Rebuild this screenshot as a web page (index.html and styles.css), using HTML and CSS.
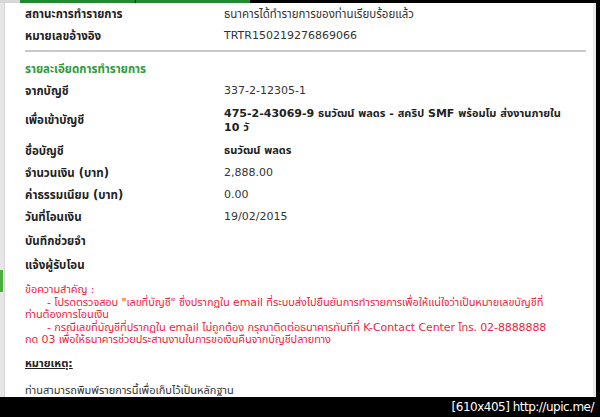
FILE: index.html
```html
<!DOCTYPE html>
<html lang="th">
<head>
<meta charset="utf-8">
<title>รายละเอียดการทำรายการ</title>
<link rel="stylesheet" href="styles.css">
</head>
<body>
<div class="frame">
  <div class="topbar">
    <div class="topbar-side"></div>
    <div class="tab"></div>
    <div class="tab tab-second"></div>
    <div class="topbar-rest"></div>
  </div>
  <div class="main">
    <div class="left-strip"><div class="left-mark"></div></div>
    <div class="content">
      <div class="row"><div class="label">สถานะการทำรายการ</div><div class="value thai">ธนาคารได้ทำรายการของท่านเรียบร้อยแล้ว</div></div>
      <div class="row"><div class="label">หมายเลขอ้างอิง</div><div class="value">TRTR150219276869066</div></div>
      <div class="divider"></div>
      <div class="section-title">รายละเอียดการทำรายการ</div>
      <div class="row"><div class="label">จากบัญชี</div><div class="value">337-2-12305-1</div></div>
      <div class="row row-tall"><div class="label">เพื่อเข้าบัญชี</div><div class="value strong">475-2-43069-9 ธนวัฒน์ พลดร - สคริป SMF พร้อมโม ส่งงานภายใน<br>10 วั</div></div>
      <div class="row"><div class="label">ชื่อบัญชี</div><div class="value strong">ธนวัฒน์ พลดร</div></div>
      <div class="row"><div class="label">จำนวนเงิน (บาท)</div><div class="value">2,888.00</div></div>
      <div class="row"><div class="label">ค่าธรรมเนียม (บาท)</div><div class="value">0.00</div></div>
      <div class="row"><div class="label">วันที่โอนเงิน</div><div class="value">19/02/2015</div></div>
      <div class="row row-memo"><div class="label">บันทึกช่วยจำ</div><div class="value"></div></div>
      <div class="row"><div class="label">แจ้งผู้รับโอน</div><div class="value"></div></div>
      <div class="notice">
        <span class="notice-line">ข้อความสำคัญ :</span>
        <span class="notice-line"><span class="indent"></span>- โปรดตรวจสอบ "เลขที่บัญชี" ซึ่งปรากฏใน email ที่ระบบส่งไปยืนยันการทำรายการเพื่อให้แน่ใจว่าเป็นหมายเลขบัญชีที่</span>
        <span class="notice-line">ท่านต้องการโอนเงิน</span>
        <span class="notice-line"><span class="indent"></span>- กรณีเลขที่บัญชีที่ปรากฏใน email ไม่ถูกต้อง กรุณาติดต่อธนาคารทันทีที่ K-Contact Center โทร. 02-8888888</span>
        <span class="notice-line">กด 03 เพื่อให้ธนาคารช่วยประสานงานในการขอเงินคืนจากบัญชีปลายทาง</span>
      </div>
      <div class="remark-title">หมายเหตุ:</div>
      <div class="remark-text">ท่านสามารถพิมพ์รายการนี้เพื่อเก็บไว้เป็นหลักฐาน</div>
    </div>
    <div class="right-strip"></div>
  </div>
  <div class="bottombar"><span class="watermark">[610x405] http://upic.me/</span></div>
</div>
</body>
</html>
```
FILE: styles.css
```css
html, body {
  margin: 0;
  padding: 0;
  background: #000;
}
.frame {
  width: 600px;
  height: 417px;
  display: grid;
  grid-template-rows: 3px 394px 20px;
  overflow: hidden;
  font-family: Tahoma, "DejaVu Sans", "Noto Sans Thai", sans-serif;
  font-size: 11px;
}
.topbar {
  display: flex;
  background: #000;
}
.topbar-side {
  width: 20px;
  background: #d8d8d8;
}
.tab {
  width: 115px;
  background: #1f8a2e;
}
.tab-second {
  margin-left: 1px;
  width: 114px;
}
.topbar-rest {
  flex: 1;
}
.main {
  display: flex;
  background: #fff;
}
.left-strip {
  width: 5px;
  background: #e6e6e6;
  border-right: 1px solid #d4d4d4;
  box-sizing: border-box;
  padding-top: 267px;
}
.left-mark {
  width: 3px;
  height: 22px;
  background: #4caf3c;
}
.content {
  flex: 1;
  padding: 0 0 0 20px;
  color: #333;
}
.right-strip {
  width: 7px;
  background: linear-gradient(to right, #e9e9e9 0, #e9e9e9 3px, #000 3px);
}
.row {
  display: flex;
  align-items: center;
  min-height: 22px;
}
.label {
  width: 199px;
  flex: none;
  font-weight: bold;
  color: #222;
  font-size: 11.5px;
}
.value {
  flex: 1;
  line-height: 14px;
}
.thai {
  font-size: 11.5px;
}
.strong {
  font-weight: bold;
  color: #222;
}
.row-tall {
  min-height: 33px;
  margin-top: 2px;
  margin-bottom: 3px;
}
.row-memo {
  min-height: 26px;
}
.divider {
  height: 2px;
  background: #c9c9c9;
  margin: 3px 7px 6px 0;
}
.section-title {
  color: #2f9a3a;
  font-weight: bold;
  font-size: 11.5px;
  height: 22px;
  line-height: 22px;
}
.notice {
  color: #f0243c;
  line-height: 12.5px;
  margin-top: 8px;
  letter-spacing: -0.1px;
}
.notice-line {
  display: block;
  white-space: nowrap;
}
.indent {
  display: inline-block;
  width: 22px;
}
.remark-title {
  margin-top: 10px;
  font-weight: bold;
  text-decoration: underline;
  color: #222;
  line-height: 14px;
}
.remark-text {
  margin-top: 13px;
  line-height: 14px;
}
.bottombar {
  background: #000;
  display: flex;
  justify-content: flex-end;
  align-items: center;
  padding-right: 6px;
}
.watermark {
  color: #fff;
  font-family: "DejaVu Sans", sans-serif;
  font-size: 12px;
  letter-spacing: -0.5px;
}
```
